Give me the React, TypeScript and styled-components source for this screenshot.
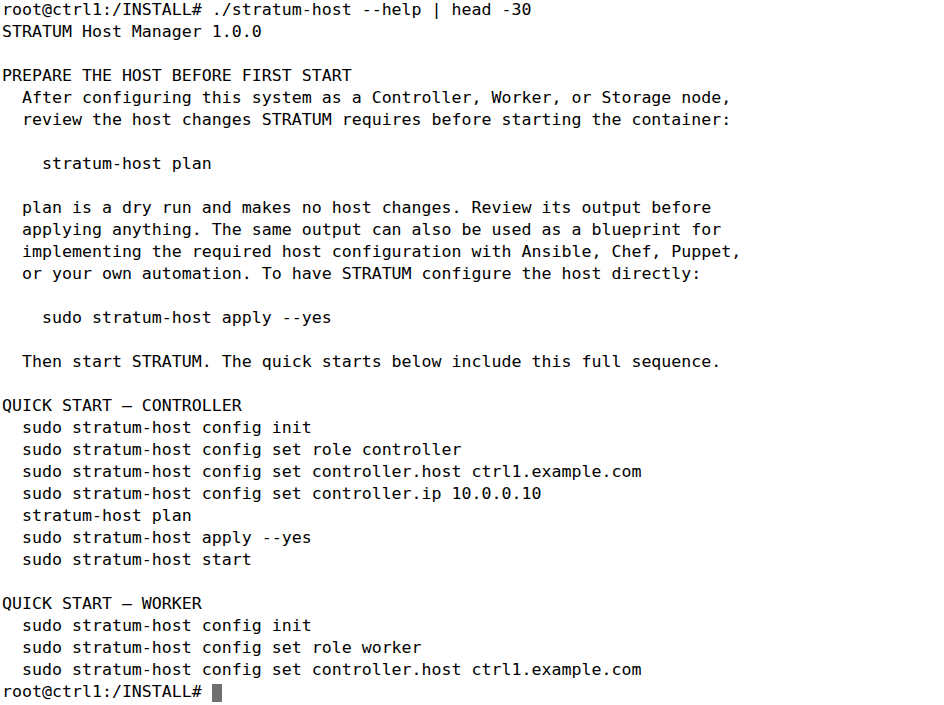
import React from "react";
import styled, { createGlobalStyle } from "styled-components";

const Global = createGlobalStyle`
  html, body { margin: 0; padding: 0; background: #ffffff; }
  body { overflow: hidden; }
`;

const Screen = styled.div`
  width: 944px;
  height: 705px;
  box-sizing: border-box;
  padding: 0 0 0 2px;
  background: #ffffff;
  color: #000000;
  font-family: "DejaVu Sans Mono", "Liberation Mono", monospace;
  font-size: 16.6px;
  line-height: 22px;
  display: flex;
  flex-direction: column;
  overflow: hidden;
`;

const Line = styled.div`
  white-space: pre;
  height: 22px;
  box-sizing: border-box;
  padding-bottom: 3px;
  display: flex;
  align-items: center;
`;

const Cursor = styled.span`
  display: inline-block;
  width: 10px;
  height: 18px;
  margin-top: 3px;
  background: #6f6f6f;
`;

const lines: string[] = [
  "root@ctrl1:/INSTALL# ./stratum-host --help | head -30",
  "STRATUM Host Manager 1.0.0",
  "",
  "PREPARE THE HOST BEFORE FIRST START",
  "  After configuring this system as a Controller, Worker, or Storage node,",
  "  review the host changes STRATUM requires before starting the container:",
  "",
  "    stratum-host plan",
  "",
  "  plan is a dry run and makes no host changes. Review its output before",
  "  applying anything. The same output can also be used as a blueprint for",
  "  implementing the required host configuration with Ansible, Chef, Puppet,",
  "  or your own automation. To have STRATUM configure the host directly:",
  "",
  "    sudo stratum-host apply --yes",
  "",
  "  Then start STRATUM. The quick starts below include this full sequence.",
  "",
  "QUICK START \u2014 CONTROLLER",
  "  sudo stratum-host config init",
  "  sudo stratum-host config set role controller",
  "  sudo stratum-host config set controller.host ctrl1.example.com",
  "  sudo stratum-host config set controller.ip 10.0.0.10",
  "  stratum-host plan",
  "  sudo stratum-host apply --yes",
  "  sudo stratum-host start",
  "",
  "QUICK START \u2014 WORKER",
  "  sudo stratum-host config init",
  "  sudo stratum-host config set role worker",
  "  sudo stratum-host config set controller.host ctrl1.example.com",
];

export default function App() {
  return (
    <>
      <Global />
      <Screen>
        {lines.map((l, i) => (
          <Line key={i}>{l || " "}</Line>
        ))}
        <Line>
          {"root@ctrl1:/INSTALL# "}
          <Cursor />
        </Line>
      </Screen>
    </>
  );
}
